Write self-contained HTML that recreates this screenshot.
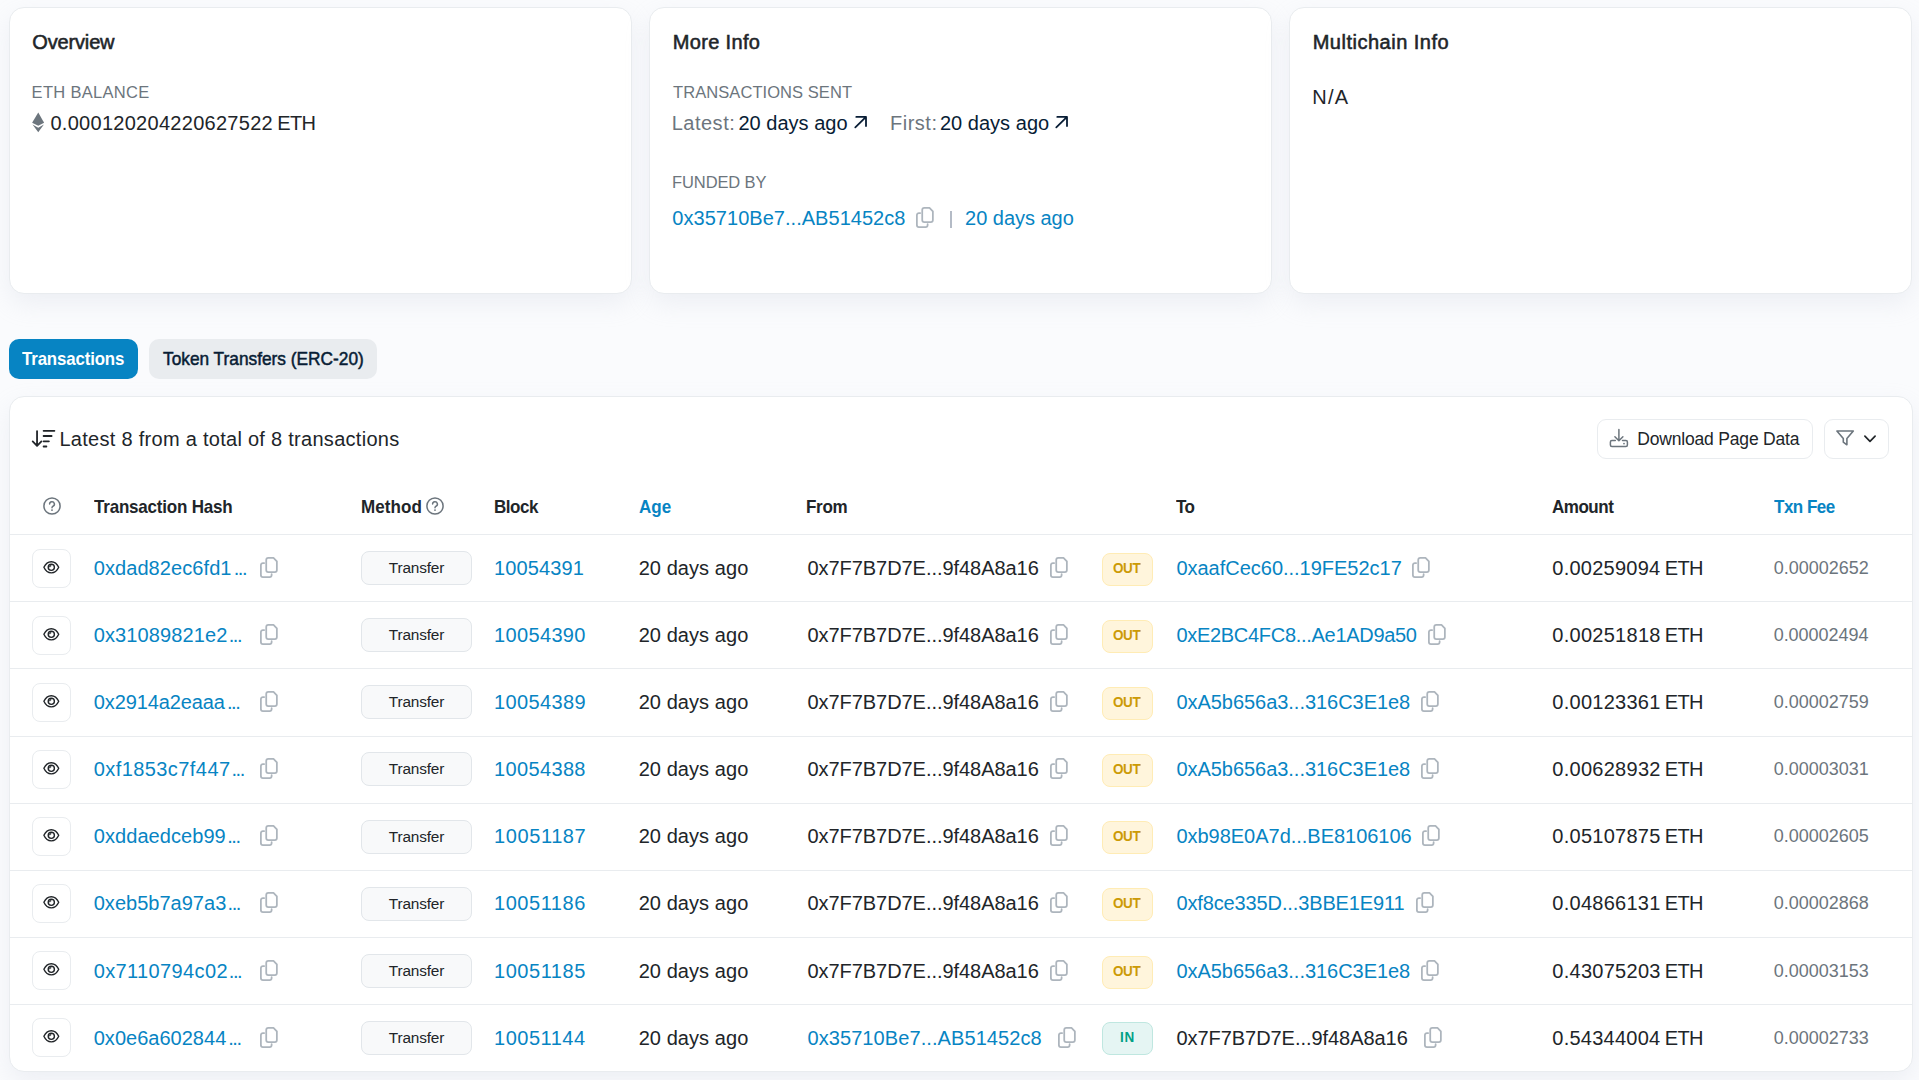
<!DOCTYPE html>
<html lang="en"><head><meta charset="utf-8"><title>Address</title>
<style>
html,body{margin:0;padding:0}
body{width:1919px;height:1080px;overflow:hidden;background:#fafbfd;font-family:"Liberation Sans",sans-serif;position:relative}
.t{position:absolute;white-space:pre;margin:0}
.ic{position:absolute;overflow:visible}
.card{position:absolute;box-sizing:border-box;background:#fff;border:1px solid #e9ecef;border-radius:15px;box-shadow:0 10px 24px rgba(189,197,209,.2)}
.tab{position:absolute;border-radius:10px}
.btn{position:absolute;box-sizing:border-box;background:#fff;border:1px solid #e9ecef;border-radius:9px}
.line{position:absolute;left:10px;width:1902px;height:1px;background:#e9ecef}
.eye{position:absolute;box-sizing:border-box;width:39px;height:39px;background:#fff;border:1px solid #e9ecef;border-radius:8px}

.meth{position:absolute;box-sizing:border-box;width:111px;height:34px;background:#f8f9fa;border:1px solid #e2e6ea;border-radius:8px}
.dir{position:absolute;box-sizing:border-box;width:51px;height:33px;border-radius:8px}
.dir.out{background:#fff5dc;border:1px solid #ffecb5}
.dir.in{background:#e5f5f3;border:1px solid #bfe7e0}
</style></head>
<body>
<div class="card" style="left:9px;top:7px;width:623px;height:287px"></div>
<div class="card" style="left:649px;top:7px;width:623px;height:287px"></div>
<div class="card" style="left:1289px;top:7px;width:623px;height:287px"></div>
<span class="t" style="left:32.31px;top:30.07px;font-size:20px;line-height:24px;color:#212529;letter-spacing:-0.159px;-webkit-text-stroke:0.55px #212529;">Overview</span>
<span class="t" style="left:672.71px;top:30.07px;font-size:20px;line-height:24px;color:#212529;letter-spacing:0.339px;-webkit-text-stroke:0.55px #212529;">More Info</span>
<span class="t" style="left:1312.71px;top:30.07px;font-size:20px;line-height:24px;color:#212529;letter-spacing:0.501px;-webkit-text-stroke:0.55px #212529;">Multichain Info</span>
<span class="t" style="left:31.61px;top:82.28px;font-size:16.5px;line-height:20px;color:#6c757d;letter-spacing:0.307px;">ETH BALANCE</span>
<span class="t" style="left:673.11px;top:82.28px;font-size:16.5px;line-height:20px;color:#6c757d;letter-spacing:0.065px;">TRANSACTIONS SENT</span>
<span class="t" style="left:672.11px;top:171.58px;font-size:16.5px;line-height:20px;color:#6c757d;letter-spacing:-0.117px;">FUNDED BY</span>
<svg class="ic" style="left:32px;top:112px" width="13" height="21" viewBox="0 0 13 21" fill="#6c757d"><path d="M6.25 0.6L12.1 10.7 6.25 13.7 0.1 10.7z"/><path d="M0.5 12.4L6.25 15.7 11.9 12.4 6.25 20.2z"/></svg>
<span class="t" style="left:50.43px;top:110.67px;font-size:20px;line-height:24px;color:#212529;letter-spacing:0.284px;">0.000120204220627522</span>
<span class="t" style="left:277.14px;top:110.67px;font-size:20px;line-height:24px;color:#212529;letter-spacing:-0.541px;">ETH</span>
<span class="t" style="left:671.64px;top:110.57px;font-size:20px;line-height:24px;color:#6c757d;letter-spacing:0.517px;">Latest:</span>
<span class="t" style="left:738.39px;top:110.57px;font-size:20px;line-height:24px;color:#081d35;letter-spacing:0.021px;">20 days ago</span>
<span class="t" style="left:889.94px;top:110.57px;font-size:20px;line-height:24px;color:#6c757d;letter-spacing:0.518px;">First:</span>
<span class="t" style="left:939.89px;top:110.57px;font-size:20px;line-height:24px;color:#081d35;letter-spacing:0.031px;">20 days ago</span>
<svg class="ic" style="left:853.60px;top:115.20px" width="14" height="14" viewBox="0 0 14 14" fill="none" stroke="#081d35" stroke-width="1.8" stroke-linecap="round" stroke-linejoin="round"><path d="M1.3 12.4L12 1.9M2.3 1.9H12V11"/></svg>
<svg class="ic" style="left:1055.40px;top:115.20px" width="14" height="14" viewBox="0 0 14 14" fill="none" stroke="#081d35" stroke-width="1.8" stroke-linecap="round" stroke-linejoin="round"><path d="M1.3 12.4L12 1.9M2.3 1.9H12V11"/></svg>
<span class="t" style="left:672.33px;top:206.07px;font-size:20px;line-height:24px;color:#0784c3;letter-spacing:0.032px;">0x35710Be7...AB51452c8</span>
<svg class="ic" style="left:915.90px;top:207.00px" width="18.7" height="21.8" viewBox="0 0 18 21" fill="none" stroke="#adb5bd" stroke-width="1.7" stroke-linecap="round" stroke-linejoin="round"><path d="M8 0.85H13L16.25 4.1V12.6a2 2 0 0 1-2 2H8a2 2 0 0 1-2-2V2.85a2 2 0 0 1 2-2z"/><path d="M4 5.85H2.85a2 2 0 0 0-2 2V17.35a2 2 0 0 0 2 2H9.2a2 2 0 0 0 2-2V16.6"/></svg>
<div style="position:absolute;left:950px;top:211px;width:2px;height:17px;background:#b4bbc6"></div>
<span class="t" style="left:965.09px;top:206.07px;font-size:20px;line-height:24px;color:#0784c3;letter-spacing:-0.028px;">20 days ago</span>
<span class="t" style="left:1312.14px;top:85.37px;font-size:20px;line-height:24px;color:#212529;letter-spacing:1.341px;">N/A</span>
<div class="tab" style="left:9px;top:339px;width:129px;height:40px;background:#0784c3"></div>
<span class="t" style="left:22.00px;top:347.69px;font-size:18.2px;line-height:22px;color:#ffffff;font-weight:bold;letter-spacing:-0.139px;display:inline-block;transform-origin:0 0;transform:scaleX(0.925);">Transactions</span>
<div class="tab" style="left:149px;top:339px;width:228px;height:40px;background:#e9ecef"></div>
<span class="t" style="left:162.87px;top:347.12px;font-size:18.4px;line-height:23px;color:#081d35;-webkit-text-stroke:0.5px #081d35;display:inline-block;transform-origin:0 0;transform:scaleX(0.94);">Token Transfers (ERC-20)</span>
<div class="card" style="left:9px;top:396px;width:1904px;height:676px"></div>
<svg class="ic" style="left:31px;top:428px" width="26" height="22" viewBox="0 0 26 22" fill="none" stroke="#212529" stroke-width="1.8" stroke-linecap="round" stroke-linejoin="round"><path d="M6.05 3.1V17.7M1.7 13.4L6.05 17.8 10.4 13.4M12.6 2.8H23.4M12.6 8H20.6M12.6 13.3H17.9M12.6 18.5H15.4"/></svg>
<span class="t" style="left:59.44px;top:427.37px;font-size:20px;line-height:24px;color:#212529;letter-spacing:0.282px;">Latest 8 from a total of 8 transactions</span>
<div class="btn" style="left:1597px;top:419px;width:216px;height:40px"></div>
<svg class="ic" style="left:1608px;top:427px" width="22" height="22" viewBox="0 0 22 22" fill="none" stroke="#6c757d" stroke-width="1.5" stroke-linecap="round" stroke-linejoin="round"><path d="M10.9 2.4V13.6M6.9 9.8L10.9 13.8 14.9 9.8"/><path d="M7.3 13.6H3.9a1.5 1.5 0 0 0-1.5 1.5V18a1.5 1.5 0 0 0 1.5 1.5H17.9a1.5 1.5 0 0 0 1.5-1.5V15.1a1.5 1.5 0 0 0-1.5-1.5H14.5"/><circle cx="16" cy="16.6" r=".9" fill="#6c757d" stroke="none"/></svg>
<span class="t" style="left:1637.31px;top:429.24px;font-size:17.5px;line-height:21px;color:#212529;letter-spacing:-0.187px;">Download Page Data</span>
<div class="btn" style="left:1824px;top:419px;width:65px;height:40px"></div>
<svg class="ic" style="left:1835px;top:429px" width="20" height="18" viewBox="0 0 20 18" fill="none" stroke="#6c757d" stroke-width="1.6" stroke-linecap="round" stroke-linejoin="round"><path d="M1.9 2H18.3L11.9 9.6V15.8L8.3 13.2V9.6z"/></svg>
<svg class="ic" style="left:1863px;top:434px" width="14" height="10" viewBox="0 0 14 10" fill="none" stroke="#212529" stroke-width="1.7" stroke-linecap="round" stroke-linejoin="round"><path d="M1.9 2.2L7 7.4 12.1 2.2"/></svg>
<svg class="ic" style="left:41.90px;top:496.20px" width="20" height="20" viewBox="0 0 20 20" fill="none" stroke="#6c757d" stroke-width="1.5" stroke-linecap="round" stroke-linejoin="round"><circle cx="10" cy="10" r="8.1"/><path d="M7.6 8.1a2.4 2.3 0 1 1 3.4 2.1c-.7.4-1 .8-1 1.5" stroke-width="1.5"/><circle cx="10" cy="14.1" r=".95" fill="#6c757d" stroke="none"/></svg>
<span class="t" style="left:94.10px;top:495.19px;font-size:18.5px;line-height:23px;color:#212529;font-weight:bold;letter-spacing:-0.236px;display:inline-block;transform-origin:0 0;transform:scaleX(0.92);">Transaction Hash</span>
<span class="t" style="left:360.97px;top:495.19px;font-size:18.5px;line-height:23px;color:#212529;font-weight:bold;letter-spacing:0.087px;display:inline-block;transform-origin:0 0;transform:scaleX(0.92);">Method</span>
<svg class="ic" style="left:425.00px;top:496.20px" width="20" height="20" viewBox="0 0 20 20" fill="none" stroke="#6c757d" stroke-width="1.5" stroke-linecap="round" stroke-linejoin="round"><circle cx="10" cy="10" r="8.1"/><path d="M7.6 8.1a2.4 2.3 0 1 1 3.4 2.1c-.7.4-1 .8-1 1.5" stroke-width="1.5"/><circle cx="10" cy="14.1" r=".95" fill="#6c757d" stroke="none"/></svg>
<span class="t" style="left:494.17px;top:495.19px;font-size:18.5px;line-height:23px;color:#212529;font-weight:bold;letter-spacing:-0.531px;display:inline-block;transform-origin:0 0;transform:scaleX(0.92);">Block</span>
<span class="t" style="left:638.89px;top:495.19px;font-size:18.5px;line-height:23px;color:#0784c3;font-weight:bold;letter-spacing:-0.021px;display:inline-block;transform-origin:0 0;transform:scaleX(0.92);">Age</span>
<span class="t" style="left:806.17px;top:495.19px;font-size:18.5px;line-height:23px;color:#212529;font-weight:bold;letter-spacing:-0.328px;display:inline-block;transform-origin:0 0;transform:scaleX(0.92);">From</span>
<span class="t" style="left:1176.10px;top:495.19px;font-size:18.5px;line-height:23px;color:#212529;font-weight:bold;letter-spacing:-0.682px;display:inline-block;transform-origin:0 0;transform:scaleX(0.92);">To</span>
<span class="t" style="left:1552.39px;top:495.19px;font-size:18.5px;line-height:23px;color:#212529;font-weight:bold;letter-spacing:-0.538px;display:inline-block;transform-origin:0 0;transform:scaleX(0.92);">Amount</span>
<span class="t" style="left:1774.30px;top:495.19px;font-size:18.5px;line-height:23px;color:#0784c3;font-weight:bold;letter-spacing:-0.559px;display:inline-block;transform-origin:0 0;transform:scaleX(0.92);">Txn Fee</span>
<div class="line" style="top:534px"></div>
<div class="eye" style="left:32px;top:549.20px"></div>
<svg class="ic" style="left:42px;top:558.80px" width="19" height="17" viewBox="0 0 19 17" fill="none" stroke="#212529" stroke-width="1.4" stroke-linejoin="round"><path d="M1.9 8.3C3.4 5 6.1 2.7 9.3 2.7s5.9 2.3 7.4 5.6c-1.5 3.3-4.2 5.6-7.4 5.6S3.4 11.600 1.900 8.300z"/><circle cx="9.3" cy="8.3" r="3.1"/><path d="M9.300 6.6a1.700 1.700 0 0 0-1.700 1.700" stroke-width="1.2"/></svg>
<span class="t" style="left:93.73px;top:556.07px;font-size:20px;line-height:24px;color:#0784c3;letter-spacing:0.079px;">0xdad82ec6fd1</span>
<span class="t" style="left:233.66px;top:556.07px;font-size:20px;line-height:24px;color:#0784c3;letter-spacing:-1.435px;">...</span>
<svg class="ic" style="left:260.10px;top:557.00px" width="18.7" height="21.8" viewBox="0 0 18 21" fill="none" stroke="#adb5bd" stroke-width="1.7" stroke-linecap="round" stroke-linejoin="round"><path d="M8 0.85H13L16.25 4.1V12.6a2 2 0 0 1-2 2H8a2 2 0 0 1-2-2V2.85a2 2 0 0 1 2-2z"/><path d="M4 5.85H2.85a2 2 0 0 0-2 2V17.35a2 2 0 0 0 2 2H9.2a2 2 0 0 0 2-2V16.6"/></svg>
<div class="meth" style="left:361px;top:551.40px"></div>
<span class="t" style="left:388.81px;top:558.26px;font-size:15.4px;line-height:19px;color:#212529;letter-spacing:-0.179px;">Transfer</span>
<span class="t" style="left:494.03px;top:556.07px;font-size:20px;line-height:24px;color:#0784c3;letter-spacing:0.131px;">10054391</span>
<span class="t" style="left:638.69px;top:556.07px;font-size:20px;line-height:24px;color:#212529;letter-spacing:0.061px;">20 days ago</span>
<span class="t" style="left:807.43px;top:556.07px;font-size:20px;line-height:24px;color:#212529;letter-spacing:-0.048px;">0x7F7B7D7E...9f48A8a16</span>
<svg class="ic" style="left:1049.60px;top:557.00px" width="18.7" height="21.8" viewBox="0 0 18 21" fill="none" stroke="#adb5bd" stroke-width="1.7" stroke-linecap="round" stroke-linejoin="round"><path d="M8 0.85H13L16.25 4.1V12.6a2 2 0 0 1-2 2H8a2 2 0 0 1-2-2V2.85a2 2 0 0 1 2-2z"/><path d="M4 5.85H2.85a2 2 0 0 0-2 2V17.35a2 2 0 0 0 2 2H9.2a2 2 0 0 0 2-2V16.6"/></svg>
<div class="dir out" style="left:1102px;top:553.10px"></div>
<span class="t" style="left:1112.99px;top:559.00px;font-size:15px;line-height:18px;color:#cc9a06;font-weight:bold;letter-spacing:-0.475px;display:inline-block;transform-origin:0 0;transform:scaleX(0.9);">OUT</span>
<span class="t" style="left:1176.43px;top:556.07px;font-size:20px;line-height:24px;color:#0784c3;letter-spacing:-0.016px;">0xaafCec60...19FE52c17</span>
<svg class="ic" style="left:1412.20px;top:557.00px" width="18.7" height="21.8" viewBox="0 0 18 21" fill="none" stroke="#adb5bd" stroke-width="1.7" stroke-linecap="round" stroke-linejoin="round"><path d="M8 0.85H13L16.25 4.1V12.6a2 2 0 0 1-2 2H8a2 2 0 0 1-2-2V2.85a2 2 0 0 1 2-2z"/><path d="M4 5.85H2.85a2 2 0 0 0-2 2V17.35a2 2 0 0 0 2 2H9.2a2 2 0 0 0 2-2V16.6"/></svg>
<span class="t" style="left:1552.33px;top:556.07px;font-size:20px;line-height:24px;color:#212529;letter-spacing:0.237px;">0.00259094</span>
<span class="t" style="left:1664.64px;top:556.07px;font-size:20px;line-height:24px;color:#212529;letter-spacing:-0.545px;">ETH</span>
<span class="t" style="left:1773.69px;top:557.36px;font-size:18px;line-height:22px;color:#6c757d;letter-spacing:0.007px;">0.00002652</span>
<div class="line" style="top:601px"></div>
<div class="eye" style="left:32px;top:616.20px"></div>
<svg class="ic" style="left:42px;top:625.80px" width="19" height="17" viewBox="0 0 19 17" fill="none" stroke="#212529" stroke-width="1.4" stroke-linejoin="round"><path d="M1.9 8.3C3.4 5 6.1 2.7 9.3 2.7s5.9 2.3 7.4 5.6c-1.5 3.3-4.2 5.6-7.4 5.6S3.4 11.600 1.900 8.300z"/><circle cx="9.3" cy="8.3" r="3.1"/><path d="M9.300 6.6a1.700 1.700 0 0 0-1.700 1.700" stroke-width="1.2"/></svg>
<span class="t" style="left:93.73px;top:623.07px;font-size:20px;line-height:24px;color:#0784c3;letter-spacing:0.114px;">0x31089821e2</span>
<span class="t" style="left:228.66px;top:623.07px;font-size:20px;line-height:24px;color:#0784c3;letter-spacing:-1.435px;">...</span>
<svg class="ic" style="left:260.10px;top:624.00px" width="18.7" height="21.8" viewBox="0 0 18 21" fill="none" stroke="#adb5bd" stroke-width="1.7" stroke-linecap="round" stroke-linejoin="round"><path d="M8 0.85H13L16.25 4.1V12.6a2 2 0 0 1-2 2H8a2 2 0 0 1-2-2V2.85a2 2 0 0 1 2-2z"/><path d="M4 5.85H2.85a2 2 0 0 0-2 2V17.35a2 2 0 0 0 2 2H9.2a2 2 0 0 0 2-2V16.6"/></svg>
<div class="meth" style="left:361px;top:618.40px"></div>
<span class="t" style="left:388.81px;top:625.26px;font-size:15.4px;line-height:19px;color:#212529;letter-spacing:-0.179px;">Transfer</span>
<span class="t" style="left:494.03px;top:623.07px;font-size:20px;line-height:24px;color:#0784c3;letter-spacing:0.350px;">10054390</span>
<span class="t" style="left:638.69px;top:623.07px;font-size:20px;line-height:24px;color:#212529;letter-spacing:0.061px;">20 days ago</span>
<span class="t" style="left:807.43px;top:623.07px;font-size:20px;line-height:24px;color:#212529;letter-spacing:-0.048px;">0x7F7B7D7E...9f48A8a16</span>
<svg class="ic" style="left:1049.60px;top:624.00px" width="18.7" height="21.8" viewBox="0 0 18 21" fill="none" stroke="#adb5bd" stroke-width="1.7" stroke-linecap="round" stroke-linejoin="round"><path d="M8 0.85H13L16.25 4.1V12.6a2 2 0 0 1-2 2H8a2 2 0 0 1-2-2V2.85a2 2 0 0 1 2-2z"/><path d="M4 5.85H2.85a2 2 0 0 0-2 2V17.35a2 2 0 0 0 2 2H9.2a2 2 0 0 0 2-2V16.6"/></svg>
<div class="dir out" style="left:1102px;top:620.10px"></div>
<span class="t" style="left:1112.99px;top:626.00px;font-size:15px;line-height:18px;color:#cc9a06;font-weight:bold;letter-spacing:-0.475px;display:inline-block;transform-origin:0 0;transform:scaleX(0.9);">OUT</span>
<span class="t" style="left:1176.43px;top:623.07px;font-size:20px;line-height:24px;color:#0784c3;letter-spacing:-0.297px;">0xE2BC4FC8...Ae1AD9a50</span>
<svg class="ic" style="left:1427.50px;top:624.00px" width="18.7" height="21.8" viewBox="0 0 18 21" fill="none" stroke="#adb5bd" stroke-width="1.7" stroke-linecap="round" stroke-linejoin="round"><path d="M8 0.85H13L16.25 4.1V12.6a2 2 0 0 1-2 2H8a2 2 0 0 1-2-2V2.85a2 2 0 0 1 2-2z"/><path d="M4 5.85H2.85a2 2 0 0 0-2 2V17.35a2 2 0 0 0 2 2H9.2a2 2 0 0 0 2-2V16.6"/></svg>
<span class="t" style="left:1552.33px;top:623.07px;font-size:20px;line-height:24px;color:#212529;letter-spacing:0.267px;">0.00251818</span>
<span class="t" style="left:1664.64px;top:623.07px;font-size:20px;line-height:24px;color:#212529;letter-spacing:-0.545px;">ETH</span>
<span class="t" style="left:1773.69px;top:624.36px;font-size:18px;line-height:22px;color:#6c757d;letter-spacing:-0.044px;">0.00002494</span>
<div class="line" style="top:668px"></div>
<div class="eye" style="left:32px;top:683.20px"></div>
<svg class="ic" style="left:42px;top:692.80px" width="19" height="17" viewBox="0 0 19 17" fill="none" stroke="#212529" stroke-width="1.4" stroke-linejoin="round"><path d="M1.9 8.3C3.4 5 6.1 2.7 9.3 2.7s5.9 2.3 7.4 5.6c-1.5 3.3-4.2 5.6-7.4 5.6S3.4 11.600 1.900 8.300z"/><circle cx="9.3" cy="8.3" r="3.1"/><path d="M9.300 6.6a1.700 1.700 0 0 0-1.700 1.700" stroke-width="1.2"/></svg>
<span class="t" style="left:93.73px;top:690.07px;font-size:20px;line-height:24px;color:#0784c3;letter-spacing:-0.108px;">0x2914a2eaaa</span>
<span class="t" style="left:226.91px;top:690.07px;font-size:20px;line-height:24px;color:#0784c3;letter-spacing:-1.435px;">...</span>
<svg class="ic" style="left:260.10px;top:691.00px" width="18.7" height="21.8" viewBox="0 0 18 21" fill="none" stroke="#adb5bd" stroke-width="1.7" stroke-linecap="round" stroke-linejoin="round"><path d="M8 0.85H13L16.25 4.1V12.6a2 2 0 0 1-2 2H8a2 2 0 0 1-2-2V2.85a2 2 0 0 1 2-2z"/><path d="M4 5.85H2.85a2 2 0 0 0-2 2V17.35a2 2 0 0 0 2 2H9.2a2 2 0 0 0 2-2V16.6"/></svg>
<div class="meth" style="left:361px;top:685.40px"></div>
<span class="t" style="left:388.81px;top:692.26px;font-size:15.4px;line-height:19px;color:#212529;letter-spacing:-0.179px;">Transfer</span>
<span class="t" style="left:494.03px;top:690.07px;font-size:20px;line-height:24px;color:#0784c3;letter-spacing:0.370px;">10054389</span>
<span class="t" style="left:638.69px;top:690.07px;font-size:20px;line-height:24px;color:#212529;letter-spacing:0.061px;">20 days ago</span>
<span class="t" style="left:807.43px;top:690.07px;font-size:20px;line-height:24px;color:#212529;letter-spacing:-0.048px;">0x7F7B7D7E...9f48A8a16</span>
<svg class="ic" style="left:1049.60px;top:691.00px" width="18.7" height="21.8" viewBox="0 0 18 21" fill="none" stroke="#adb5bd" stroke-width="1.7" stroke-linecap="round" stroke-linejoin="round"><path d="M8 0.85H13L16.25 4.1V12.6a2 2 0 0 1-2 2H8a2 2 0 0 1-2-2V2.85a2 2 0 0 1 2-2z"/><path d="M4 5.85H2.85a2 2 0 0 0-2 2V17.35a2 2 0 0 0 2 2H9.2a2 2 0 0 0 2-2V16.6"/></svg>
<div class="dir out" style="left:1102px;top:687.10px"></div>
<span class="t" style="left:1112.99px;top:693.00px;font-size:15px;line-height:18px;color:#cc9a06;font-weight:bold;letter-spacing:-0.475px;display:inline-block;transform-origin:0 0;transform:scaleX(0.9);">OUT</span>
<span class="t" style="left:1176.43px;top:690.07px;font-size:20px;line-height:24px;color:#0784c3;letter-spacing:-0.039px;">0xA5b656a3...316C3E1e8</span>
<svg class="ic" style="left:1420.80px;top:691.00px" width="18.7" height="21.8" viewBox="0 0 18 21" fill="none" stroke="#adb5bd" stroke-width="1.7" stroke-linecap="round" stroke-linejoin="round"><path d="M8 0.85H13L16.25 4.1V12.6a2 2 0 0 1-2 2H8a2 2 0 0 1-2-2V2.85a2 2 0 0 1 2-2z"/><path d="M4 5.85H2.85a2 2 0 0 0-2 2V17.35a2 2 0 0 0 2 2H9.2a2 2 0 0 0 2-2V16.6"/></svg>
<span class="t" style="left:1552.33px;top:690.07px;font-size:20px;line-height:24px;color:#212529;letter-spacing:0.265px;">0.00123361</span>
<span class="t" style="left:1664.64px;top:690.07px;font-size:20px;line-height:24px;color:#212529;letter-spacing:-0.545px;">ETH</span>
<span class="t" style="left:1773.69px;top:691.36px;font-size:18px;line-height:22px;color:#6c757d;">0.00002759</span>
<div class="line" style="top:736px"></div>
<div class="eye" style="left:32px;top:750.20px"></div>
<svg class="ic" style="left:42px;top:759.80px" width="19" height="17" viewBox="0 0 19 17" fill="none" stroke="#212529" stroke-width="1.4" stroke-linejoin="round"><path d="M1.9 8.3C3.4 5 6.1 2.7 9.3 2.7s5.9 2.3 7.4 5.6c-1.5 3.3-4.2 5.6-7.4 5.6S3.4 11.600 1.900 8.300z"/><circle cx="9.3" cy="8.3" r="3.1"/><path d="M9.300 6.6a1.700 1.700 0 0 0-1.700 1.700" stroke-width="1.2"/></svg>
<span class="t" style="left:93.73px;top:757.07px;font-size:20px;line-height:24px;color:#0784c3;letter-spacing:0.426px;">0xf1853c7f447</span>
<span class="t" style="left:231.41px;top:757.07px;font-size:20px;line-height:24px;color:#0784c3;letter-spacing:-1.435px;">...</span>
<svg class="ic" style="left:260.10px;top:758.00px" width="18.7" height="21.8" viewBox="0 0 18 21" fill="none" stroke="#adb5bd" stroke-width="1.7" stroke-linecap="round" stroke-linejoin="round"><path d="M8 0.85H13L16.25 4.1V12.6a2 2 0 0 1-2 2H8a2 2 0 0 1-2-2V2.85a2 2 0 0 1 2-2z"/><path d="M4 5.85H2.85a2 2 0 0 0-2 2V17.35a2 2 0 0 0 2 2H9.2a2 2 0 0 0 2-2V16.6"/></svg>
<div class="meth" style="left:361px;top:752.40px"></div>
<span class="t" style="left:388.81px;top:759.26px;font-size:15.4px;line-height:19px;color:#212529;letter-spacing:-0.179px;">Transfer</span>
<span class="t" style="left:494.03px;top:757.07px;font-size:20px;line-height:24px;color:#0784c3;letter-spacing:0.355px;">10054388</span>
<span class="t" style="left:638.69px;top:757.07px;font-size:20px;line-height:24px;color:#212529;letter-spacing:0.061px;">20 days ago</span>
<span class="t" style="left:807.43px;top:757.07px;font-size:20px;line-height:24px;color:#212529;letter-spacing:-0.048px;">0x7F7B7D7E...9f48A8a16</span>
<svg class="ic" style="left:1049.60px;top:758.00px" width="18.7" height="21.8" viewBox="0 0 18 21" fill="none" stroke="#adb5bd" stroke-width="1.7" stroke-linecap="round" stroke-linejoin="round"><path d="M8 0.85H13L16.25 4.1V12.6a2 2 0 0 1-2 2H8a2 2 0 0 1-2-2V2.85a2 2 0 0 1 2-2z"/><path d="M4 5.85H2.85a2 2 0 0 0-2 2V17.35a2 2 0 0 0 2 2H9.2a2 2 0 0 0 2-2V16.6"/></svg>
<div class="dir out" style="left:1102px;top:754.10px"></div>
<span class="t" style="left:1112.99px;top:760.00px;font-size:15px;line-height:18px;color:#cc9a06;font-weight:bold;letter-spacing:-0.475px;display:inline-block;transform-origin:0 0;transform:scaleX(0.9);">OUT</span>
<span class="t" style="left:1176.43px;top:757.07px;font-size:20px;line-height:24px;color:#0784c3;letter-spacing:-0.039px;">0xA5b656a3...316C3E1e8</span>
<svg class="ic" style="left:1420.80px;top:758.00px" width="18.7" height="21.8" viewBox="0 0 18 21" fill="none" stroke="#adb5bd" stroke-width="1.7" stroke-linecap="round" stroke-linejoin="round"><path d="M8 0.85H13L16.25 4.1V12.6a2 2 0 0 1-2 2H8a2 2 0 0 1-2-2V2.85a2 2 0 0 1 2-2z"/><path d="M4 5.85H2.85a2 2 0 0 0-2 2V17.35a2 2 0 0 0 2 2H9.2a2 2 0 0 0 2-2V16.6"/></svg>
<span class="t" style="left:1552.33px;top:757.07px;font-size:20px;line-height:24px;color:#212529;letter-spacing:0.269px;">0.00628932</span>
<span class="t" style="left:1664.64px;top:757.07px;font-size:20px;line-height:24px;color:#212529;letter-spacing:-0.545px;">ETH</span>
<span class="t" style="left:1773.69px;top:758.36px;font-size:18px;line-height:22px;color:#6c757d;">0.00003031</span>
<div class="line" style="top:803px"></div>
<div class="eye" style="left:32px;top:817.20px"></div>
<svg class="ic" style="left:42px;top:826.80px" width="19" height="17" viewBox="0 0 19 17" fill="none" stroke="#212529" stroke-width="1.4" stroke-linejoin="round"><path d="M1.9 8.3C3.4 5 6.1 2.7 9.3 2.7s5.9 2.3 7.4 5.6c-1.5 3.3-4.2 5.6-7.4 5.6S3.4 11.600 1.900 8.300z"/><circle cx="9.3" cy="8.3" r="3.1"/><path d="M9.300 6.6a1.700 1.700 0 0 0-1.700 1.700" stroke-width="1.2"/></svg>
<span class="t" style="left:93.73px;top:824.07px;font-size:20px;line-height:24px;color:#0784c3;letter-spacing:0.072px;">0xddaedceb99</span>
<span class="t" style="left:227.21px;top:824.07px;font-size:20px;line-height:24px;color:#0784c3;letter-spacing:-1.435px;">...</span>
<svg class="ic" style="left:260.10px;top:825.00px" width="18.7" height="21.8" viewBox="0 0 18 21" fill="none" stroke="#adb5bd" stroke-width="1.7" stroke-linecap="round" stroke-linejoin="round"><path d="M8 0.85H13L16.25 4.1V12.6a2 2 0 0 1-2 2H8a2 2 0 0 1-2-2V2.85a2 2 0 0 1 2-2z"/><path d="M4 5.85H2.85a2 2 0 0 0-2 2V17.35a2 2 0 0 0 2 2H9.2a2 2 0 0 0 2-2V16.6"/></svg>
<div class="meth" style="left:361px;top:820.40px"></div>
<span class="t" style="left:388.81px;top:827.26px;font-size:15.4px;line-height:19px;color:#212529;letter-spacing:-0.179px;">Transfer</span>
<span class="t" style="left:494.03px;top:824.07px;font-size:20px;line-height:24px;color:#0784c3;letter-spacing:0.598px;">10051187</span>
<span class="t" style="left:638.69px;top:824.07px;font-size:20px;line-height:24px;color:#212529;letter-spacing:0.061px;">20 days ago</span>
<span class="t" style="left:807.43px;top:824.07px;font-size:20px;line-height:24px;color:#212529;letter-spacing:-0.048px;">0x7F7B7D7E...9f48A8a16</span>
<svg class="ic" style="left:1049.60px;top:825.00px" width="18.7" height="21.8" viewBox="0 0 18 21" fill="none" stroke="#adb5bd" stroke-width="1.7" stroke-linecap="round" stroke-linejoin="round"><path d="M8 0.85H13L16.25 4.1V12.6a2 2 0 0 1-2 2H8a2 2 0 0 1-2-2V2.85a2 2 0 0 1 2-2z"/><path d="M4 5.85H2.85a2 2 0 0 0-2 2V17.35a2 2 0 0 0 2 2H9.2a2 2 0 0 0 2-2V16.6"/></svg>
<div class="dir out" style="left:1102px;top:821.10px"></div>
<span class="t" style="left:1112.99px;top:827.00px;font-size:15px;line-height:18px;color:#cc9a06;font-weight:bold;letter-spacing:-0.475px;display:inline-block;transform-origin:0 0;transform:scaleX(0.9);">OUT</span>
<span class="t" style="left:1176.43px;top:824.07px;font-size:20px;line-height:24px;color:#0784c3;letter-spacing:-0.023px;">0xb98E0A7d...BE8106106</span>
<svg class="ic" style="left:1421.90px;top:825.00px" width="18.7" height="21.8" viewBox="0 0 18 21" fill="none" stroke="#adb5bd" stroke-width="1.7" stroke-linecap="round" stroke-linejoin="round"><path d="M8 0.85H13L16.25 4.1V12.6a2 2 0 0 1-2 2H8a2 2 0 0 1-2-2V2.85a2 2 0 0 1 2-2z"/><path d="M4 5.85H2.85a2 2 0 0 0-2 2V17.35a2 2 0 0 0 2 2H9.2a2 2 0 0 0 2-2V16.6"/></svg>
<span class="t" style="left:1552.33px;top:824.07px;font-size:20px;line-height:24px;color:#212529;letter-spacing:0.255px;">0.05107875</span>
<span class="t" style="left:1664.64px;top:824.07px;font-size:20px;line-height:24px;color:#212529;letter-spacing:-0.545px;">ETH</span>
<span class="t" style="left:1773.69px;top:825.36px;font-size:18px;line-height:22px;color:#6c757d;letter-spacing:-0.009px;">0.00002605</span>
<div class="line" style="top:870px"></div>
<div class="eye" style="left:32px;top:884.20px"></div>
<svg class="ic" style="left:42px;top:893.80px" width="19" height="17" viewBox="0 0 19 17" fill="none" stroke="#212529" stroke-width="1.4" stroke-linejoin="round"><path d="M1.9 8.3C3.4 5 6.1 2.7 9.3 2.7s5.9 2.3 7.4 5.6c-1.5 3.3-4.2 5.6-7.4 5.6S3.4 11.600 1.900 8.300z"/><circle cx="9.3" cy="8.3" r="3.1"/><path d="M9.300 6.6a1.700 1.700 0 0 0-1.700 1.700" stroke-width="1.2"/></svg>
<span class="t" style="left:93.73px;top:891.07px;font-size:20px;line-height:24px;color:#0784c3;letter-spacing:0.017px;">0xeb5b7a97a3</span>
<span class="t" style="left:227.61px;top:891.07px;font-size:20px;line-height:24px;color:#0784c3;letter-spacing:-1.435px;">...</span>
<svg class="ic" style="left:260.10px;top:892.00px" width="18.7" height="21.8" viewBox="0 0 18 21" fill="none" stroke="#adb5bd" stroke-width="1.7" stroke-linecap="round" stroke-linejoin="round"><path d="M8 0.85H13L16.25 4.1V12.6a2 2 0 0 1-2 2H8a2 2 0 0 1-2-2V2.85a2 2 0 0 1 2-2z"/><path d="M4 5.85H2.85a2 2 0 0 0-2 2V17.35a2 2 0 0 0 2 2H9.2a2 2 0 0 0 2-2V16.6"/></svg>
<div class="meth" style="left:361px;top:887.40px"></div>
<span class="t" style="left:388.81px;top:894.26px;font-size:15.4px;line-height:19px;color:#212529;letter-spacing:-0.179px;">Transfer</span>
<span class="t" style="left:494.03px;top:891.07px;font-size:20px;line-height:24px;color:#0784c3;letter-spacing:0.545px;">10051186</span>
<span class="t" style="left:638.69px;top:891.07px;font-size:20px;line-height:24px;color:#212529;letter-spacing:0.061px;">20 days ago</span>
<span class="t" style="left:807.43px;top:891.07px;font-size:20px;line-height:24px;color:#212529;letter-spacing:-0.048px;">0x7F7B7D7E...9f48A8a16</span>
<svg class="ic" style="left:1049.60px;top:892.00px" width="18.7" height="21.8" viewBox="0 0 18 21" fill="none" stroke="#adb5bd" stroke-width="1.7" stroke-linecap="round" stroke-linejoin="round"><path d="M8 0.85H13L16.25 4.1V12.6a2 2 0 0 1-2 2H8a2 2 0 0 1-2-2V2.85a2 2 0 0 1 2-2z"/><path d="M4 5.85H2.85a2 2 0 0 0-2 2V17.35a2 2 0 0 0 2 2H9.2a2 2 0 0 0 2-2V16.6"/></svg>
<div class="dir out" style="left:1102px;top:888.10px"></div>
<span class="t" style="left:1112.99px;top:894.00px;font-size:15px;line-height:18px;color:#cc9a06;font-weight:bold;letter-spacing:-0.475px;display:inline-block;transform-origin:0 0;transform:scaleX(0.9);">OUT</span>
<span class="t" style="left:1176.43px;top:891.07px;font-size:20px;line-height:24px;color:#0784c3;letter-spacing:-0.127px;">0xf8ce335D...3BBE1E911</span>
<svg class="ic" style="left:1416.00px;top:892.00px" width="18.7" height="21.8" viewBox="0 0 18 21" fill="none" stroke="#adb5bd" stroke-width="1.7" stroke-linecap="round" stroke-linejoin="round"><path d="M8 0.85H13L16.25 4.1V12.6a2 2 0 0 1-2 2H8a2 2 0 0 1-2-2V2.85a2 2 0 0 1 2-2z"/><path d="M4 5.85H2.85a2 2 0 0 0-2 2V17.35a2 2 0 0 0 2 2H9.2a2 2 0 0 0 2-2V16.6"/></svg>
<span class="t" style="left:1552.33px;top:891.07px;font-size:20px;line-height:24px;color:#212529;letter-spacing:0.265px;">0.04866131</span>
<span class="t" style="left:1664.64px;top:891.07px;font-size:20px;line-height:24px;color:#212529;letter-spacing:-0.545px;">ETH</span>
<span class="t" style="left:1773.69px;top:892.36px;font-size:18px;line-height:22px;color:#6c757d;">0.00002868</span>
<div class="line" style="top:937px"></div>
<div class="eye" style="left:32px;top:951.20px"></div>
<svg class="ic" style="left:42px;top:960.80px" width="19" height="17" viewBox="0 0 19 17" fill="none" stroke="#212529" stroke-width="1.4" stroke-linejoin="round"><path d="M1.9 8.3C3.4 5 6.1 2.7 9.3 2.7s5.9 2.3 7.4 5.6c-1.5 3.3-4.2 5.6-7.4 5.6S3.4 11.600 1.900 8.300z"/><circle cx="9.3" cy="8.3" r="3.1"/><path d="M9.300 6.6a1.700 1.700 0 0 0-1.700 1.700" stroke-width="1.2"/></svg>
<span class="t" style="left:93.73px;top:959.07px;font-size:20px;line-height:24px;color:#0784c3;letter-spacing:0.373px;">0x7110794c02</span>
<span class="t" style="left:228.81px;top:959.07px;font-size:20px;line-height:24px;color:#0784c3;letter-spacing:-1.435px;">...</span>
<svg class="ic" style="left:260.10px;top:960.00px" width="18.7" height="21.8" viewBox="0 0 18 21" fill="none" stroke="#adb5bd" stroke-width="1.7" stroke-linecap="round" stroke-linejoin="round"><path d="M8 0.85H13L16.25 4.1V12.6a2 2 0 0 1-2 2H8a2 2 0 0 1-2-2V2.85a2 2 0 0 1 2-2z"/><path d="M4 5.85H2.85a2 2 0 0 0-2 2V17.35a2 2 0 0 0 2 2H9.2a2 2 0 0 0 2-2V16.6"/></svg>
<div class="meth" style="left:361px;top:954.40px"></div>
<span class="t" style="left:388.81px;top:961.26px;font-size:15.4px;line-height:19px;color:#212529;letter-spacing:-0.179px;">Transfer</span>
<span class="t" style="left:494.03px;top:959.07px;font-size:20px;line-height:24px;color:#0784c3;letter-spacing:0.543px;">10051185</span>
<span class="t" style="left:638.69px;top:959.07px;font-size:20px;line-height:24px;color:#212529;letter-spacing:0.061px;">20 days ago</span>
<span class="t" style="left:807.43px;top:959.07px;font-size:20px;line-height:24px;color:#212529;letter-spacing:-0.048px;">0x7F7B7D7E...9f48A8a16</span>
<svg class="ic" style="left:1049.60px;top:960.00px" width="18.7" height="21.8" viewBox="0 0 18 21" fill="none" stroke="#adb5bd" stroke-width="1.7" stroke-linecap="round" stroke-linejoin="round"><path d="M8 0.85H13L16.25 4.1V12.6a2 2 0 0 1-2 2H8a2 2 0 0 1-2-2V2.85a2 2 0 0 1 2-2z"/><path d="M4 5.85H2.85a2 2 0 0 0-2 2V17.35a2 2 0 0 0 2 2H9.2a2 2 0 0 0 2-2V16.6"/></svg>
<div class="dir out" style="left:1102px;top:956.10px"></div>
<span class="t" style="left:1112.99px;top:962.00px;font-size:15px;line-height:18px;color:#cc9a06;font-weight:bold;letter-spacing:-0.475px;display:inline-block;transform-origin:0 0;transform:scaleX(0.9);">OUT</span>
<span class="t" style="left:1176.43px;top:959.07px;font-size:20px;line-height:24px;color:#0784c3;letter-spacing:-0.039px;">0xA5b656a3...316C3E1e8</span>
<svg class="ic" style="left:1420.80px;top:960.00px" width="18.7" height="21.8" viewBox="0 0 18 21" fill="none" stroke="#adb5bd" stroke-width="1.7" stroke-linecap="round" stroke-linejoin="round"><path d="M8 0.85H13L16.25 4.1V12.6a2 2 0 0 1-2 2H8a2 2 0 0 1-2-2V2.85a2 2 0 0 1 2-2z"/><path d="M4 5.85H2.85a2 2 0 0 0-2 2V17.35a2 2 0 0 0 2 2H9.2a2 2 0 0 0 2-2V16.6"/></svg>
<span class="t" style="left:1552.33px;top:959.07px;font-size:20px;line-height:24px;color:#212529;letter-spacing:0.267px;">0.43075203</span>
<span class="t" style="left:1664.64px;top:959.07px;font-size:20px;line-height:24px;color:#212529;letter-spacing:-0.545px;">ETH</span>
<span class="t" style="left:1773.69px;top:960.36px;font-size:18px;line-height:22px;color:#6c757d;">0.00003153</span>
<div class="line" style="top:1004px"></div>
<div class="eye" style="left:32px;top:1018.20px"></div>
<svg class="ic" style="left:42px;top:1027.80px" width="19" height="17" viewBox="0 0 19 17" fill="none" stroke="#212529" stroke-width="1.4" stroke-linejoin="round"><path d="M1.9 8.3C3.4 5 6.1 2.7 9.3 2.7s5.9 2.3 7.4 5.6c-1.5 3.3-4.2 5.6-7.4 5.6S3.4 11.600 1.900 8.300z"/><circle cx="9.3" cy="8.3" r="3.1"/><path d="M9.300 6.6a1.700 1.700 0 0 0-1.700 1.700" stroke-width="1.2"/></svg>
<span class="t" style="left:93.73px;top:1026.07px;font-size:20px;line-height:24px;color:#0784c3;letter-spacing:0.019px;">0x0e6a602844</span>
<span class="t" style="left:228.21px;top:1026.07px;font-size:20px;line-height:24px;color:#0784c3;letter-spacing:-1.435px;">...</span>
<svg class="ic" style="left:260.10px;top:1027.00px" width="18.7" height="21.8" viewBox="0 0 18 21" fill="none" stroke="#adb5bd" stroke-width="1.7" stroke-linecap="round" stroke-linejoin="round"><path d="M8 0.85H13L16.25 4.1V12.6a2 2 0 0 1-2 2H8a2 2 0 0 1-2-2V2.85a2 2 0 0 1 2-2z"/><path d="M4 5.85H2.85a2 2 0 0 0-2 2V17.35a2 2 0 0 0 2 2H9.2a2 2 0 0 0 2-2V16.6"/></svg>
<div class="meth" style="left:361px;top:1021.40px"></div>
<span class="t" style="left:388.81px;top:1028.26px;font-size:15.4px;line-height:19px;color:#212529;letter-spacing:-0.179px;">Transfer</span>
<span class="t" style="left:494.03px;top:1026.07px;font-size:20px;line-height:24px;color:#0784c3;letter-spacing:0.513px;">10051144</span>
<span class="t" style="left:638.69px;top:1026.07px;font-size:20px;line-height:24px;color:#212529;letter-spacing:0.061px;">20 days ago</span>
<span class="t" style="left:807.43px;top:1026.07px;font-size:20px;line-height:24px;color:#0784c3;letter-spacing:0.088px;">0x35710Be7...AB51452c8</span>
<svg class="ic" style="left:1058.20px;top:1027.00px" width="18.7" height="21.8" viewBox="0 0 18 21" fill="none" stroke="#adb5bd" stroke-width="1.7" stroke-linecap="round" stroke-linejoin="round"><path d="M8 0.85H13L16.25 4.1V12.6a2 2 0 0 1-2 2H8a2 2 0 0 1-2-2V2.85a2 2 0 0 1 2-2z"/><path d="M4 5.85H2.85a2 2 0 0 0-2 2V17.35a2 2 0 0 0 2 2H9.2a2 2 0 0 0 2-2V16.6"/></svg>
<div class="dir in" style="left:1102px;top:1022.10px"></div>
<span class="t" style="left:1120.47px;top:1028.00px;font-size:15px;line-height:18px;color:#00a186;font-weight:bold;letter-spacing:0.806px;display:inline-block;transform-origin:0 0;transform:scaleX(0.9);">IN</span>
<span class="t" style="left:1176.43px;top:1026.07px;font-size:20px;line-height:24px;color:#212529;letter-spacing:-0.049px;">0x7F7B7D7E...9f48A8a16</span>
<svg class="ic" style="left:1424.40px;top:1027.00px" width="18.7" height="21.8" viewBox="0 0 18 21" fill="none" stroke="#adb5bd" stroke-width="1.7" stroke-linecap="round" stroke-linejoin="round"><path d="M8 0.85H13L16.25 4.1V12.6a2 2 0 0 1-2 2H8a2 2 0 0 1-2-2V2.85a2 2 0 0 1 2-2z"/><path d="M4 5.85H2.85a2 2 0 0 0-2 2V17.35a2 2 0 0 0 2 2H9.2a2 2 0 0 0 2-2V16.6"/></svg>
<span class="t" style="left:1552.33px;top:1026.07px;font-size:20px;line-height:24px;color:#212529;letter-spacing:0.237px;">0.54344004</span>
<span class="t" style="left:1664.64px;top:1026.07px;font-size:20px;line-height:24px;color:#212529;letter-spacing:-0.545px;">ETH</span>
<span class="t" style="left:1773.69px;top:1027.36px;font-size:18px;line-height:22px;color:#6c757d;">0.00002733</span>
</body></html>
